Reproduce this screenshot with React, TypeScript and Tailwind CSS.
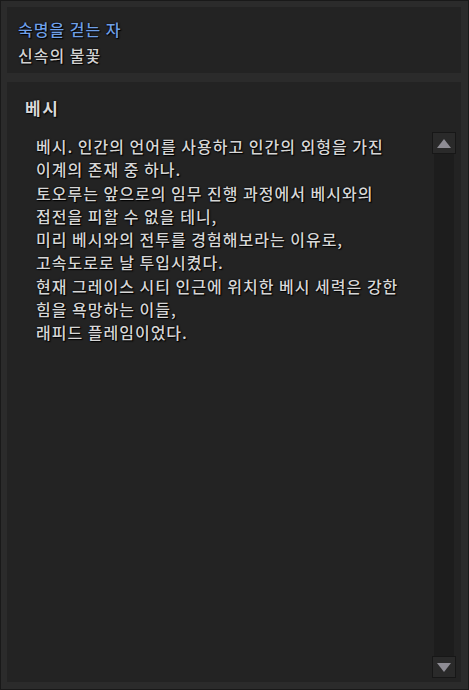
import React from "react";

const lines = [
  "베시. 인간의 언어를 사용하고 인간의 외형을 가진",
  "이계의 존재 중 하나.",
  "토오루는 앞으로의 임무 진행 과정에서 베시와의",
  "접전을 피할 수 없을 테니,",
  "미리 베시와의 전투를 경험해보라는 이유로,",
  "고속도로로 날 투입시켰다.",
  "현재 그레이스 시티 인근에 위치한 베시 세력은 강한",
  "힘을 욕망하는 이들,",
  "래피드 플레임이었다.",
];

const font = { fontFamily: '"Noto Sans CJK KR", "Noto Sans", sans-serif' };

export default function App() {
  return (
    <div
      className="w-[469px] h-[690px] bg-[#2b2b2b] border border-[#191919] pt-[6px] pl-[6px] pr-[7px] pb-[7px] flex flex-col gap-[9px] [text-shadow:1px_1px_1px_#000,0_0_2px_#000]"
      style={font}
    >
      <div className="h-[66px] bg-[#232323] pl-[11px] pt-[9px] flex flex-col">
        <div className="text-[16px] leading-[26px] tracking-[1px] font-medium text-[#6f9fe6]">숙명을 걷는 자</div>
        <div className="text-[16px] leading-[26px] tracking-[1px] font-medium text-[#d2d2d2]">신속의 불꽃</div>
      </div>
      <div className="flex-1 bg-[#232323] flex flex-col">
        <div className="h-[50px] pl-[18px] pt-[13px] text-[17px] leading-[26px] tracking-[1.5px] text-[#d8d8d8] font-bold">
          베시
        </div>
        <div className="flex-1 flex pb-[4px]">
          <div className="flex-1 pl-[29px] pt-[3px]">
            {lines.map((l, i) => (
              <div key={i} className="text-[16px] leading-[23.3px] tracking-[1px] font-medium text-[#d6d6d6] whitespace-nowrap">
                {l}
              </div>
            ))}
          </div>
          <div className="w-[24px] mr-[5px] flex flex-col">
            <div className="h-[22px] bg-[#2a2a2a] border border-[#171717] flex items-center justify-center">
              <svg width="14" height="9" viewBox="0 0 14 9">
                <polygon points="7,0 14,9 0,9" fill="#8e8c94" />
              </svg>
            </div>
            <div className="flex-1 mx-[2px] bg-[#1d1d1d]" />
            <div className="h-[22px] bg-[#2a2a2a] border border-[#171717] flex items-center justify-center">
              <svg width="14" height="9" viewBox="0 0 14 9">
                <polygon points="0,0 14,0 7,9" fill="#8e8c94" />
              </svg>
            </div>
          </div>
        </div>
      </div>
    </div>
  );
}
